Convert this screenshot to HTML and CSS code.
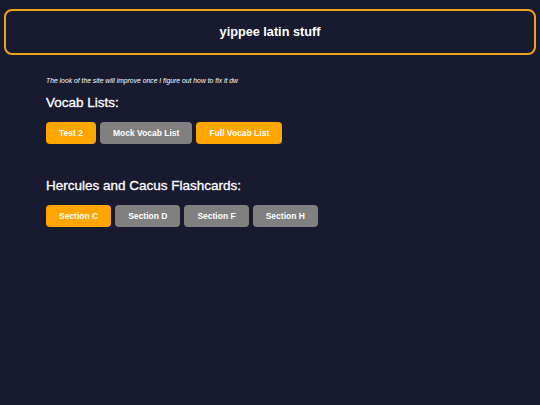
FILE: index.html
```html
<!DOCTYPE html>
<html lang="en">
<head>
    <meta charset="UTF-8">
    <meta name="viewport" content="width=device-width, initial-scale=1.0">
    <title>yippee latin stuff</title>
    <link rel="stylesheet" href="styles.css">
</head>
<body>
<header class="site-header">
    <h1>yippee latin stuff</h1>
</header>

<main class="content">
    <p class="note">The look of the site will improve once I figure out how to fix it dw</p>

    <section class="group">
        <h2>Vocab Lists:</h2>
        <div class="buttons">
            <button class="btn orange">Test 2</button>
            <button class="btn grey">Mock Vocab List</button>
            <button class="btn orange">Full Vocab List</button>
        </div>
    </section>

    <section class="group">
        <h2>Hercules and Cacus Flashcards:</h2>
        <div class="buttons">
            <button class="btn orange">Section C</button>
            <button class="btn grey">Section D</button>
            <button class="btn grey">Section F</button>
            <button class="btn grey">Section H</button>
        </div>
    </section>
</main>
</body>
</html>
```

FILE: styles.css
```css
body {
    margin: 0;
    background-color: #181b30;
    color: #ffffff;
    font-family: "Liberation Sans", Arial, sans-serif;
}
.site-header {
    margin: 9px 4px 0;
    height: 46px;
    box-sizing: border-box;
    border: 2px solid #f0a21e;
    border-radius: 8px;
    display: flex;
    align-items: center;
    justify-content: center;
}
.site-header h1 {
    margin: 0;
    font-size: 12.7px;
    font-weight: bold;
}
.content {
    padding: 0 46px;
}
.note {
    margin: 21px 0 0;
    font-size: 6.8px;
    line-height: 10px;
    font-style: italic;
}
.group h2 {
    margin: 9px 0 11px;
    font-size: 13.5px;
    line-height: 16px;
    font-weight: normal;
    -webkit-text-stroke: 0.3px #ffffff;
}
.group + .group h2 {
    margin-top: 34px;
}
.buttons {
    display: flex;
    gap: 4px;
}
.btn {
    height: 22px;
    padding: 0 13px;
    border: none;
    border-radius: 4px;
    color: white;
    font-family: "Liberation Sans", Arial, sans-serif;
    font-size: 8.5px;
    font-weight: bold;
    cursor: pointer;
}
.orange {
    background-color: #ffa500;
}
.grey {
    background-color: #808080;
}
```
